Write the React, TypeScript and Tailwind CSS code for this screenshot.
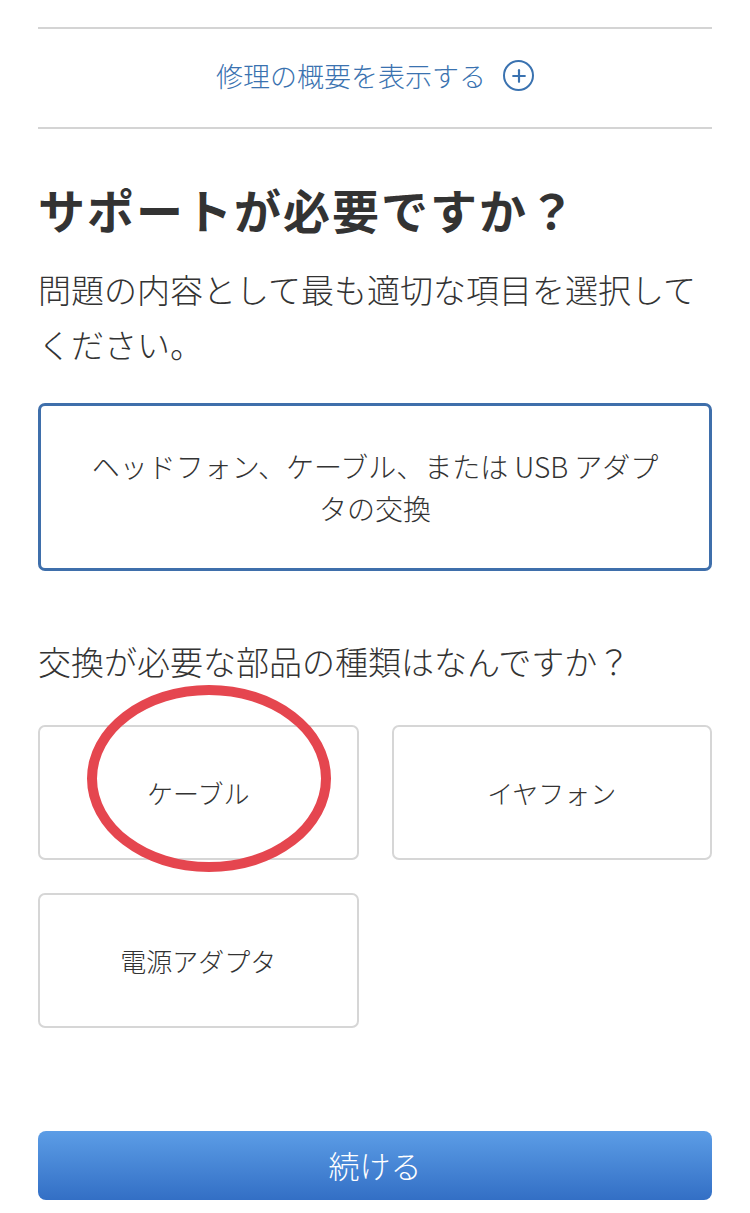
import { Plus } from 'lucide-react'

const font = { fontFamily: '"Noto Sans CJK JP", "Noto Sans", sans-serif' }

export default function App() {
  return (
    <div className="w-[750px] min-h-[1213px] bg-white px-[38px] pt-[27px] text-[#333]" style={font}>
      {/* summary toggle */}
      <div className="border-y-2 border-[#d4d4d4] h-[102px] flex items-center justify-center gap-[17px] pb-[5px] text-[#3a72b0]">
        <span className="text-[27px] leading-none font-light">修理の概要を表示する</span>
        <span className="w-[31px] h-[31px] rounded-full border-[2.5px] border-[#3a72b0] flex items-center justify-center">
          <Plus className="w-[20px] h-[20px]" strokeWidth={2.6} />
        </span>
      </div>

      <h1 className="mt-[50px] text-[47px] leading-[60px] font-bold tracking-[2px]">サポートが必要ですか？</h1>
      <p className="mt-[23px] text-[33px] leading-[55px] font-light">問題の内容として最も適切な項目を選択してください。</p>

      {/* selected issue */}
      <div className="mt-[31px] h-[168px] rounded-[7px] border-[3px] border-[#3f6fab] px-[46px] flex items-center justify-center text-center">
        <span className="text-[28px] leading-[42px] font-light">ヘッドフォン、ケーブル、または USB アダプタの交換</span>
      </div>

      <p className="mt-[63px] text-[33px] leading-[55px] font-light">交換が必要な部品の種類はなんですか？</p>

      <div className="relative mt-[36px] grid grid-cols-2 gap-[33px]">
        {['ケーブル', 'イヤフォン', '電源アダプタ'].map((label) => (
          <button
            key={label}
            className="h-[135px] rounded-[7px] border-2 border-[#d6d6d6] bg-white flex items-center justify-center text-[26px] font-light text-[#333]"
          >
            {label}
          </button>
        ))}
        {/* annotation */}
        <div className="absolute left-[49px] top-[-40px] w-[244px] h-[187px] rounded-[50%] border-[10px] border-[#e5464f] pointer-events-none" />
      </div>

      <button className="mt-[103px] w-full h-[69px] rounded-[8px] bg-gradient-to-b from-[#5c9de6] to-[#336fc5] text-white text-[31px] font-light flex items-center justify-center">
        続ける
      </button>
    </div>
  )
}
